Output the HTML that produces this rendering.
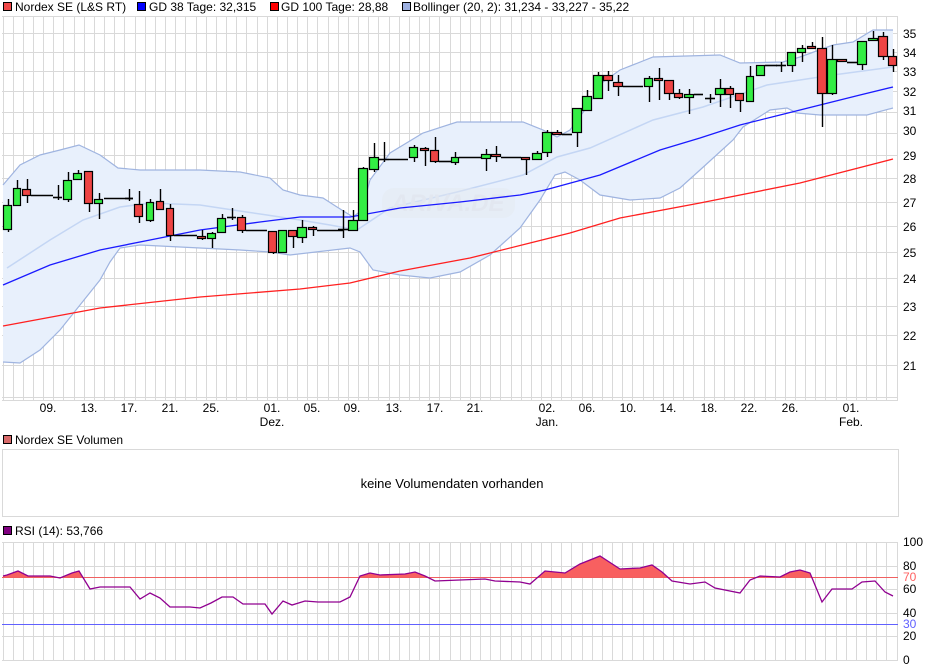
<!DOCTYPE html>
<html><head><meta charset="utf-8"><style>
html,body{margin:0;padding:0;background:#fff;}
svg{display:block;font-family:"Liberation Sans",sans-serif;}
</style></head><body>
<svg id="s" width="940" height="670" viewBox="0 0 940 670" xmlns="http://www.w3.org/2000/svg">
<rect width="940" height="670" fill="#fff"/>
<g id="grid" stroke="#d9d9d9" stroke-width="1" shape-rendering="crispEdges"></g>
<g id="bands"></g>
<rect x="382" y="188" width="133" height="30" rx="12" fill="#e4e8f0" opacity="0.45"/>
<text x="448" y="211" font-size="24" font-weight="bold" font-style="italic" fill="#e2e7f0" text-anchor="middle">ARIVA.DE</text>
<g id="lines" fill="none"></g>
<g id="candles"></g>
<g id="rsi"></g>
<g font-size="12" fill="#000">
<rect x="3.5" y="2.5" width="8" height="8" fill="#f04848" stroke="#000"/><text x="15" y="11">Nordex SE (L&amp;S RT)</text>
<rect x="137.5" y="2.5" width="8" height="8" fill="#0000ff" stroke="#000"/><text x="149" y="11">GD 38 Tage: 32,315</text>
<rect x="270.5" y="2.5" width="8" height="8" fill="#ff0000" stroke="#000"/><text x="281" y="11">GD 100 Tage: 28,88</text>
<rect x="402.5" y="2.5" width="8" height="8" fill="#9db0e0" stroke="#000"/><text x="413" y="11">Bollinger (20, 2): 31,234 - 33,227 - 35,22</text>
<rect x="3.5" y="435.5" width="8" height="8" fill="#d86a6a" stroke="#000"/><text x="15" y="444">Nordex SE Volumen</text>
<rect x="3.5" y="526.5" width="8" height="8" fill="#800080" stroke="#000"/><text x="15" y="535">RSI (14): 53,766</text>
</g>
<rect x="2.5" y="449.5" width="896" height="67" fill="none" stroke="#d9d9d9"/>
<text x="452" y="488" font-size="13" text-anchor="middle" fill="#000">keine Volumendaten vorhanden</text>
<g font-size="12" fill="#000">
<text x="903" y="38">35</text><text x="903" y="57">34</text><text x="903" y="76">33</text><text x="903" y="96">32</text><text x="903" y="115">31</text><text x="903" y="135">30</text><text x="903" y="160">29</text><text x="903" y="183">28</text><text x="903" y="207">27</text><text x="903" y="231">26</text><text x="903" y="257">25</text><text x="903" y="283">24</text><text x="903" y="311">23</text><text x="903" y="340">22</text><text x="903" y="370">21</text>
</g>
<g font-size="12" fill="#000" text-anchor="middle">
<text x="48" y="412">09.</text><text x="89" y="412">13.</text><text x="129" y="412">17.</text><text x="170" y="412">21.</text><text x="211" y="412">25.</text>
<text x="272" y="412">01.</text><text x="272" y="426">Dez.</text>
<text x="312" y="412">05.</text><text x="352" y="412">09.</text><text x="394" y="412">13.</text><text x="435" y="412">17.</text><text x="475" y="412">21.</text>
<text x="547" y="412">02.</text><text x="547" y="426">Jan.</text>
<text x="587" y="412">06.</text><text x="628" y="412">10.</text><text x="668" y="412">14.</text><text x="709" y="412">18.</text><text x="749" y="412">22.</text><text x="790" y="412">26.</text>
<text x="851" y="412">01.</text><text x="851" y="426">Feb.</text>
</g>
<g font-size="12">
<text x="903" y="546" fill="#000">100</text><text x="903" y="570" fill="#000">80</text><text x="903" y="581" fill="#ff6060">70</text><text x="903" y="593" fill="#000">60</text><text x="903" y="617" fill="#000">40</text><text x="903" y="628" fill="#6060ff">30</text><text x="903" y="640" fill="#000">20</text><text x="903" y="664" fill="#000">0</text>
</g>
</svg>
<script>
const NS="http://www.w3.org/2000/svg";
function el(p,t,a){const e=document.createElementNS(NS,t);for(const k in a)e.setAttribute(k,a[k]);document.getElementById(p).appendChild(e);return e;}
const step=10.16;
for(let i=0;i<=88;i++){const x=Math.round(2.5+i*step)+0.5;
 el("grid","line",{x1:x,y1:16,x2:x,y2:400});
 el("grid","line",{x1:x,y1:542,x2:x,y2:660});}
el("grid","line",{x1:2,y1:16.5,x2:898,y2:16.5});
for(let p=35;p>=20;p--){const y=Math.round(33+650*Math.log(35/p))+0.5;el("grid","line",{x1:2,y1:y,x2:898,y2:y});}
el("grid","line",{x1:2,y1:400.5,x2:898,y2:400.5});
for(let v=100;v>=0;v-=20){const y=Math.round(660-v*1.18)+0.5;el("grid","line",{x1:2,y1:y,x2:898,y2:y});}
const up=[[3,185],[20,165],[40,155],[60,150],[79,145],[100,155],[118,168],[140,170],[200,170],[240,172],[270,178],[283,190],[300,195],[323,198],[337,207],[353,217],[362,210],[370,180],[390,153],[423,133],[457,122],[523,122],[543,130],[557,137],[570,130],[587,107],[603,82],[620,70],[653,57],[720,55],[740,63],[783,62],[800,57],[833,45],[853,42],[873,30],[893,30]];
const lo=[[3,362],[20,363],[40,350],[60,330],[80,305],[100,280],[110,262],[120,248],[140,245],[200,248],[240,250],[270,252],[290,255],[350,248],[360,252],[373,270],[400,275],[430,278],[460,272],[490,255],[520,228],[540,200],[555,175],[565,172],[580,180],[600,195],[630,200],[660,198],[680,188],[700,170],[733,140],[743,127],[770,110],[787,108],[797,113],[820,115],[867,115],[893,108]];
const mid=[[7,268],[50,240],[83,220],[120,207],[150,203],[200,205],[233,210],[267,215],[300,220],[330,225],[357,230],[390,208],[457,192],[523,175],[557,157],[590,148],[653,120],[703,107],[767,85],[833,75],[893,67]];
const pts=a=>a.map(p=>p.join(",")).join(" ");
el("bands","polygon",{points:pts(up)+" "+pts(lo.slice().reverse()),fill:"#e8f0fc"});
el("bands","polyline",{points:pts(up),fill:"none",stroke:"#9fb4e0","stroke-width":1.2});
el("bands","polyline",{points:pts(lo),fill:"none",stroke:"#9fb4e0","stroke-width":1.2});
el("bands","polyline",{points:pts(mid),fill:"none",stroke:"#c4d6f4","stroke-width":1.5});
const gd38=[[3,285],[50,265],[100,250],[150,240],[200,230],[260,222],[300,217],[350,217],[400,208],[460,202],[520,195],[545,190],[600,175],[660,150],[700,138],[740,125],[780,115],[820,105],[860,95],[893,87]];
const gd100=[[3,326],[100,308],[200,297],[300,289],[350,283],[400,271],[470,258],[530,243],[570,233],[620,218],[700,203],[800,183],[893,159]];
el("lines","polyline",{points:pts(gd38),stroke:"#1a1aff","stroke-width":1.3});
el("lines","polyline",{points:pts(gd100),stroke:"#ff2020","stroke-width":1.3});
const C=[[3,12,205,229,199,232,"g"],[13,21,188,205,180,205,"g"],[22,31,189,195,179,203,"r"],
[53,62,197,197,185,200,"d"],[63,72,180,199,172,202,"g"],[73,82,173,179,170,180,"g"],[84,93,171,203,171,212,"r"],[94,103,199,203,193,219,"g"],
[125,133,198,198,189,201,"d"],[134,143,204,216,191,223,"r"],[146,154,202,220,199,222,"g"],[156,164,201,209,189,210,"r"],[166,174,208,235,204,241,"r"],
[197,206,236,238,230,240,"r"],[207,216,233,238,232,248,"g"],[217,226,218,232,214,232,"g"],[227,236,217,217,208,220,"d"],[237,246,217,230,215,233,"r"],
[268,277,231,252,231,254,"r"],[278,287,230,252,230,253,"g"],[288,297,230,236,230,248,"r"],[297,307,227,237,220,243,"g"],[308,317,227,229,226,236,"r"],
[338,348,229,229,210,238,"d"],[348,358,220,230,210,230,"g"],[358,368,168,220,167,220,"g"],[369,379,157,169,143,172,"g"],[379,389,159,159,142,162,"d"],
[409,418,147,157,145,162,"g"],[420,429,148,150,147,166,"r"],[430,439,150,161,137,163,"r"],[451,459,157,162,152,165,"g"],
[481,491,154,158,149,171,"g"],[491,501,154,156,146,162,"r"],[521,530,157,159,157,175,"r"],[532,542,153,159,151,160,"g"],[542,552,132,152,130,157,"g"],[552,562,132,134,130,134,"r"],
[572,582,108,132,108,147,"g"],[582,592,96,110,90,110,"g"],[593,603,75,98,72,98,"g"],[603,613,75,80,71,91,"r"],[613,623,82,86,75,96,"r"],
[644,653,78,86,76,102,"g"],[654,663,78,80,68,100,"r"],[664,674,80,93,80,100,"r"],[674,683,93,97,89,99,"r"],[684,694,94,97,89,114,"g"],
[705,715,98,98,94,103,"d"],[715,725,88,94,79,107,"g"],[725,734,88,94,86,108,"r"],[735,744,93,100,93,112,"r"],[746,754,76,101,66,101,"g"],[756,765,65,75,65,76,"g"],
[776,786,65,65,62,72,"d"],[787,796,52,65,52,72,"g"],[797,806,48,52,45,62,"g"],[807,816,46,48,42,48,"r"],[817,827,48,93,37,127,"r"],[827,837,59,93,45,95,"g"],[837,847,59,61,59,62,"r"],
[857,867,41,64,41,70,"g"],[868,878,38,40,31,40,"g"],[878,888,36,56,32,60,"r"],[888,897,56,65,49,72,"r"]];
const F=[[31,53,195],[104,133,198],[174,197,235],[246,267,230],[317,343,230],[389,408,159],[439,451,161],[459,481,157],[501,521,157],[562,572,134],[623,643,86],[694,703,94],[765,777,65],[847,857,62]];
for(const f of F)el("candles","line",{x1:f[0],x2:f[1],y1:f[2]+.5,y2:f[2]+.5,stroke:"#000","stroke-width":1.6});
for(const c of C){const cx=Math.round((c[0]+c[1])/2)+.5;
 el("candles","line",{x1:cx,x2:cx,y1:c[4],y2:c[5],stroke:"#000","stroke-width":1.4});
 if(c[6]=="d"){el("candles","line",{x1:c[0],x2:c[1],y1:c[2]+.5,y2:c[2]+.5,stroke:"#000","stroke-width":1.6});}
 else el("candles","rect",{x:c[0]+.5,y:c[2]+.5,width:c[1]-c[0]-1,height:Math.max(1,c[3]-c[2]),fill:c[6]=="g"?"#33ee44":"#ee4444",stroke:"#000","stroke-width":1.2});}
const R=[[3,576],[7,575],[18,571],[28,576],[50,576],[60,578],[72,573],[79,571],[90,589],[100,587],[130,587],[140,599],[150,593],[160,598],[170,607],[190,607],[200,608],[211,603],[222,597],[233,597],[243,604],[265,604],[272,614],[283,601],[292,605],[305,601],[318,602],[340,602],[350,597],[360,576],[370,573],[380,575],[405,574],[415,572],[425,576],[435,581],[460,580],[485,579],[495,581],[520,582],[530,584],[545,571],[565,573],[580,564],[600,556],[620,569],[640,568],[652,565],[662,572],[672,581],[690,584],[705,582],[715,588],[740,593],[750,580],[760,576],[780,577],[790,572],[800,570],[810,573],[822,602],[832,589],[852,589],[862,582],[875,581],[885,592],[893,596]];
const cp=el("rsi","clipPath",{id:"cp"});const cr=document.createElementNS(NS,"rect");cr.setAttribute("x",0);cr.setAttribute("y",540);cr.setAttribute("width",900);cr.setAttribute("height",37);cp.appendChild(cr);
el("rsi","polygon",{points:"3,577 "+pts(R)+" 893,577",fill:"#f86060","clip-path":"url(#cp)"});
el("rsi","line",{x1:2,x2:898,y1:577.5,y2:577.5,stroke:"#f06060","stroke-width":1});
el("rsi","line",{x1:2,x2:898,y1:624.5,y2:624.5,stroke:"#6060ff","stroke-width":1});
el("rsi","polyline",{points:pts(R),fill:"none",stroke:"#900090","stroke-width":1.3});
</script>
</body></html>
